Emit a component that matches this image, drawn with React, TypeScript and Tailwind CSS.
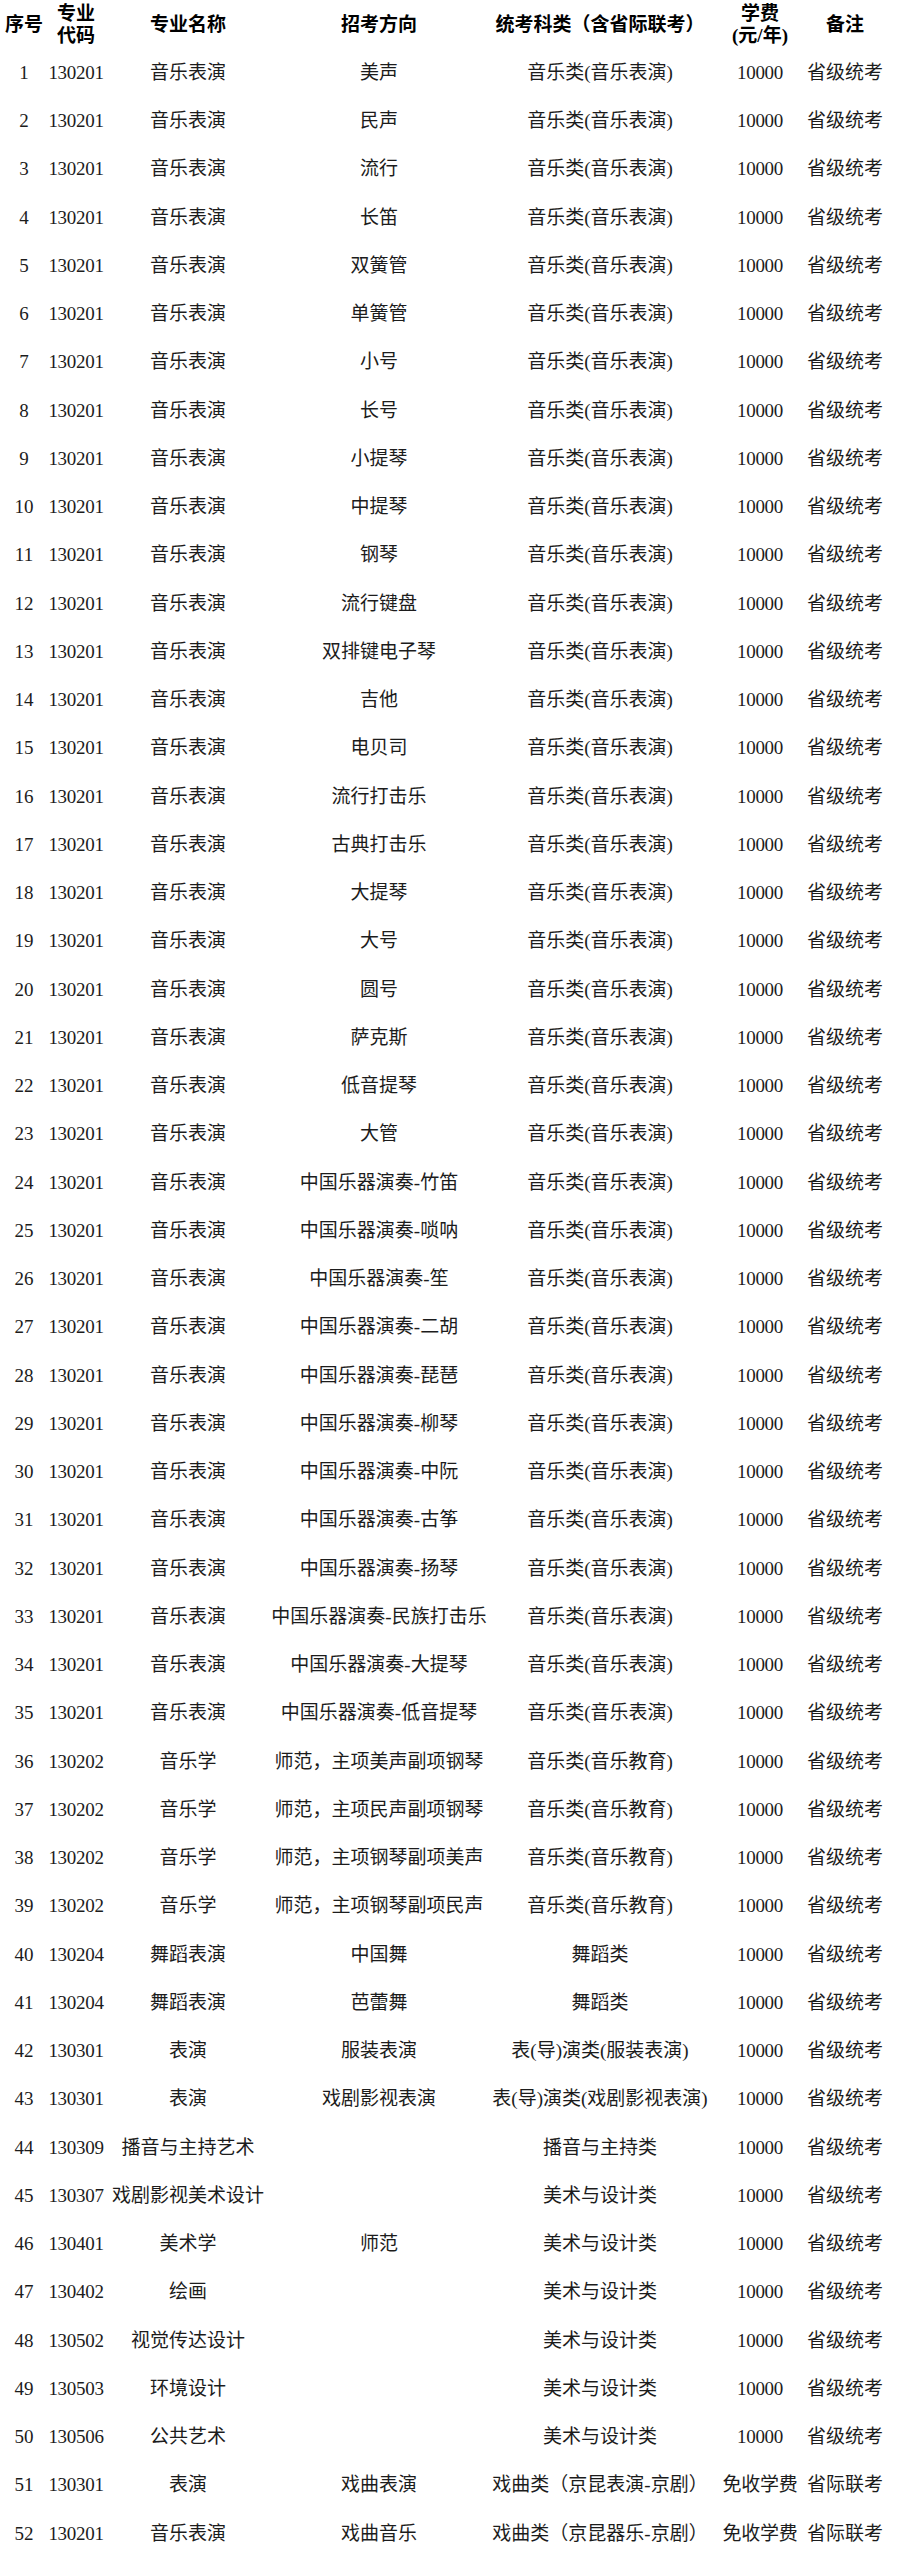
import React from "react";

type Row = [string, string, string, string, string, string];

const music = (dir: string): Row => ["130201", "音乐表演", dir, "音乐类(音乐表演)", "10000", "省级统考"];
const edu = (dir: string): Row => ["130202", "音乐学", dir, "音乐类(音乐教育)", "10000", "省级统考"];
const art = (code: string, name: string, dir = ""): Row => [code, name, dir, "美术与设计类", "10000", "省级统考"];

const rows: Row[] = [
  music("美声"),
  music("民声"),
  music("流行"),
  music("长笛"),
  music("双簧管"),
  music("单簧管"),
  music("小号"),
  music("长号"),
  music("小提琴"),
  music("中提琴"),
  music("钢琴"),
  music("流行键盘"),
  music("双排键电子琴"),
  music("吉他"),
  music("电贝司"),
  music("流行打击乐"),
  music("古典打击乐"),
  music("大提琴"),
  music("大号"),
  music("圆号"),
  music("萨克斯"),
  music("低音提琴"),
  music("大管"),
  music("中国乐器演奏-竹笛"),
  music("中国乐器演奏-唢呐"),
  music("中国乐器演奏-笙"),
  music("中国乐器演奏-二胡"),
  music("中国乐器演奏-琵琶"),
  music("中国乐器演奏-柳琴"),
  music("中国乐器演奏-中阮"),
  music("中国乐器演奏-古筝"),
  music("中国乐器演奏-扬琴"),
  music("中国乐器演奏-民族打击乐"),
  music("中国乐器演奏-大提琴"),
  music("中国乐器演奏-低音提琴"),
  edu("师范，主项美声副项钢琴"),
  edu("师范，主项民声副项钢琴"),
  edu("师范，主项钢琴副项美声"),
  edu("师范，主项钢琴副项民声"),
  ["130204", "舞蹈表演", "中国舞", "舞蹈类", "10000", "省级统考"],
  ["130204", "舞蹈表演", "芭蕾舞", "舞蹈类", "10000", "省级统考"],
  ["130301", "表演", "服装表演", "表(导)演类(服装表演)", "10000", "省级统考"],
  ["130301", "表演", "戏剧影视表演", "表(导)演类(戏剧影视表演)", "10000", "省级统考"],
  ["130309", "播音与主持艺术", "", "播音与主持类", "10000", "省级统考"],
  art("130307", "戏剧影视美术设计"),
  art("130401", "美术学", "师范"),
  art("130402", "绘画"),
  art("130502", "视觉传达设计"),
  art("130503", "环境设计"),
  art("130506", "公共艺术"),
  ["130301", "表演", "戏曲表演", "戏曲类（京昆表演-京剧）", "免收学费", "省际联考"],
  ["130201", "音乐表演", "戏曲音乐", "戏曲类（京昆器乐-京剧）", "免收学费", "省际联考"],
];

const grid = "grid grid-cols-[48px_56px_168px_214px_228px_92px_78px]";

const Cell = ({ children, className = "" }: { children: React.ReactNode; className?: string }) => (
  <div className={`flex items-center justify-center whitespace-nowrap ${className}`}>{children}</div>
);

export default function App() {
  return (
    <div
      className="w-[900px] min-h-[2563px] bg-white text-[19px] text-[#1c1c1c]"
      style={{ fontFamily: '"Liberation Serif", "Noto Sans CJK SC", serif' }}
    >
      <div className={`${grid} h-[49px] font-bold text-black leading-[22px]`}>
        <Cell>序号</Cell>
        <Cell className="flex-col">
          <span>专业</span>
          <span>代码</span>
        </Cell>
        <Cell>专业名称</Cell>
        <Cell>招考方向</Cell>
        <Cell>统考科类（含省际联考）</Cell>
        <Cell className="flex-col">
          <span>学费</span>
          <span>(元/年)</span>
        </Cell>
        <Cell>备注</Cell>
      </div>
      {rows.map((r, i) => (
        <div key={i} className={`${grid} h-[48.25px]`}>
          <Cell>{i + 1}</Cell>
          <Cell className="tracking-[-0.3px]">{r[0]}</Cell>
          <Cell>{r[1]}</Cell>
          <Cell>{r[2]}</Cell>
          <Cell>{r[3]}</Cell>
          <Cell className="tracking-[-0.3px]">{r[4]}</Cell>
          <Cell>{r[5]}</Cell>
        </div>
      ))}
    </div>
  );
}
